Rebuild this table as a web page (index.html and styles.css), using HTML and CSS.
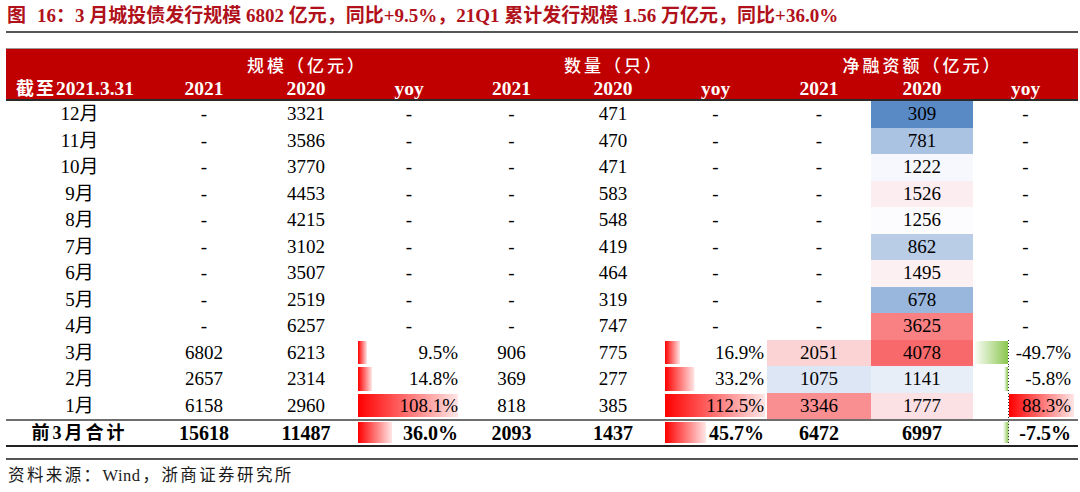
FILE: index.html
```html
<!DOCTYPE html>
<html lang="zh-CN">
<head>
<meta charset="utf-8">
<title>城投债发行规模</title>
<link rel="stylesheet" href="styles.css">
</head>
<body>
<div class="page">
  <h1 class="title">图<span class="gap"></span>16：3 月城投债发行规模 6802 亿元，同比+9.5%，21Q1 累计发行规模 1.56 万亿元，同比+36.0%</h1>
  <table class="report">
    <colgroup>
      <col class="w-label"><col class="w-102"><col class="w-102"><col class="w-104">
      <col class="w-101"><col class="w-102"><col class="w-103">
      <col class="w-104"><col class="w-102"><col class="w-105">
    </colgroup>
    <thead>
      <tr class="head-1">
        <th></th>
        <th colspan="3" class="grp">规模（亿元）</th>
        <th colspan="3" class="grp">数量（只）</th>
        <th colspan="3" class="grp">净融资额（亿元）</th>
      </tr>
      <tr class="head-2">
        <th class="lbl"><span class="cjk">截至</span>2021.3.31</th>
        <th>2021</th><th>2020</th><th>yoy</th>
        <th>2021</th><th>2020</th><th>yoy</th>
        <th>2021</th><th>2020</th><th class="yoy-net">yoy</th>
      </tr>
    </thead>
    <tbody>
      <tr><td>12月</td><td>-</td><td>3321</td><td>-</td><td>-</td><td>471</td><td>-</td><td>-</td><td style="background:#5a8ac6">309</td><td class="yoy-net">-</td></tr>
      <tr><td>11月</td><td>-</td><td>3586</td><td>-</td><td>-</td><td>470</td><td>-</td><td>-</td><td style="background:#abc3e2">781</td><td class="yoy-net">-</td></tr>
      <tr><td>10月</td><td>-</td><td>3770</td><td>-</td><td>-</td><td>471</td><td>-</td><td>-</td><td style="background:#f6f8fd">1222</td><td class="yoy-net">-</td></tr>
      <tr><td>9月</td><td>-</td><td>4453</td><td>-</td><td>-</td><td>583</td><td>-</td><td>-</td><td style="background:#fcedf0">1526</td><td class="yoy-net">-</td></tr>
      <tr><td>8月</td><td>-</td><td>4215</td><td>-</td><td>-</td><td>548</td><td>-</td><td>-</td><td style="background:#fcfbfe">1256</td><td class="yoy-net">-</td></tr>
      <tr><td>7月</td><td>-</td><td>3102</td><td>-</td><td>-</td><td>419</td><td>-</td><td>-</td><td style="background:#b9cde7">862</td><td class="yoy-net">-</td></tr>
      <tr><td>6月</td><td>-</td><td>3507</td><td>-</td><td>-</td><td>464</td><td>-</td><td>-</td><td style="background:#fcf0f3">1495</td><td class="yoy-net">-</td></tr>
      <tr><td>5月</td><td>-</td><td>2519</td><td>-</td><td>-</td><td>319</td><td>-</td><td>-</td><td style="background:#99b6dc">678</td><td class="yoy-net">-</td></tr>
      <tr><td>4月</td><td>-</td><td>6257</td><td>-</td><td>-</td><td>747</td><td>-</td><td>-</td><td style="background:#f98083">3625</td><td class="yoy-net">-</td></tr>
      <tr><td>3月</td><td>6802</td><td>6213</td><td class="bar" style="--w:9px">9.5%</td><td>906</td><td>775</td><td class="bar" style="--w:15px">16.9%</td><td style="background:#fbd3d5">2051</td><td style="background:#f8696b">4078</td><td class="net neg" style="--w:35px">-49.7%</td></tr>
      <tr><td>2月</td><td>2657</td><td>2314</td><td class="bar" style="--w:14px">14.8%</td><td>369</td><td>277</td><td class="bar" style="--w:29.5px">33.2%</td><td style="background:#dde6f4">1075</td><td style="background:#e8eef8">1141</td><td class="net neg" style="--w:4px">-5.8%</td></tr>
      <tr><td>1月</td><td>6158</td><td>2960</td><td class="bar" style="--w:100px">108.1%</td><td>818</td><td>385</td><td class="bar" style="--w:100px">112.5%</td><td style="background:#f98f91">3346</td><td style="background:#fbe1e4">1777</td><td class="net pos" style="--w:65px">88.3%</td></tr>
    </tbody>
    <tfoot>
      <tr class="total">
        <td class="lbl-total">前3月合计</td>
        <td>15618</td><td>11487</td><td class="bar" style="--w:34px">36.0%</td>
        <td>2093</td><td>1437</td><td class="bar" style="--w:41px">45.7%</td>
        <td>6472</td><td>6997</td><td class="net neg" style="--w:5.5px">-7.5%</td>
      </tr>
    </tfoot>
  </table>
  <div class="rule"></div>
  <p class="source">资料来源：<span class="latin">Wind</span>，浙商证券研究所</p>
</div>
</body>
</html>
```
FILE: styles.css
```css
* { box-sizing: border-box; }

body {
  margin: 0;
  background: #ffffff;
  color: #000000;
  font-family: "Liberation Serif", "Noto Sans CJK SC", serif;
}

.page {
  width: 1072px;
  margin-left: 6px;
}

.title {
  margin: 0;
  height: 33px;
  padding-left: 1px;
  border-bottom: 2px solid #555555;
  font-size: 19px;
  line-height: 31px;
  font-weight: 700;
  color: #b0111a;
  white-space: nowrap;
}

.gap {
  display: inline-block;
  width: 11px;
}

.report {
  margin-top: 15px;
  width: 1072px;
  table-layout: fixed;
  border-collapse: separate;
  border-spacing: 0;
  border-top: 1px solid #9a9a9a;
}

.w-label { width: 147px; }
.w-101 { width: 101px; }
.w-102 { width: 102px; }
.w-103 { width: 103px; }
.w-104 { width: 104px; }
.w-105 { width: 105px; }

.report th,
.report td {
  padding: 0;
  text-align: center;
  white-space: nowrap;
}

.report thead th {
  background: #c00000;
  color: #ffffff;
  vertical-align: bottom;
  line-height: 20px;
}

.head-1 th {
  height: 26px;
  font-family: "Noto Sans CJK SC", sans-serif;
  font-size: 17px;
  font-weight: 500;
  letter-spacing: 3px;
}

.head-2 th {
  height: 26px;
  border-bottom: 2px solid #2a2a2a;
  font-size: 19.5px;
  font-weight: 700;
}

.head-2 .lbl {
  text-align: left;
  padding-left: 10px;
}

.cjk {
  font-family: "Noto Sans CJK SC", sans-serif;
  font-size: 18px;
  letter-spacing: 2px;
}

.report tbody td {
  height: 26.5px;
  font-size: 19px;
  line-height: 20px;
  vertical-align: middle;
}

.bar {
  background-image: linear-gradient(90deg, #ff0000, #ffe6e6);
  background-repeat: no-repeat;
  background-position: 1px 1px;
  background-size: var(--w) calc(100% - 3px);
}

.report td.bar {
  text-align: right;
  padding-right: 3px;
}

.report td.net {
  text-align: right;
  padding-right: 7px;
  background-repeat: no-repeat;
}

.net.neg {
  background-image:
    repeating-linear-gradient(180deg, #333333 0 1px, transparent 1px 3px),
    linear-gradient(90deg, #ffffff, #8cc751);
  background-size: 1px 100%, var(--w) calc(100% - 3px);
  background-position: 35px 0, calc(35px - var(--w)) 1px;
}

.net.pos {
  background-image:
    repeating-linear-gradient(180deg, #333333 0 1px, transparent 1px 3px),
    linear-gradient(90deg, #ff0000, #ffe6e6);
  background-size: 1px 100%, var(--w) calc(100% - 3px);
  background-position: 35px 0, 36px 1px;
}

.report .yoy-net {
  padding-right: 0;
}

.total td {
  height: 28px;
  border-top: 2px solid #6e6e6e;
  border-bottom: 2px solid #222222;
  font-size: 20px;
  font-weight: 700;
  line-height: 20px;
  vertical-align: middle;
}

.total .lbl-total {
  font-size: 18px;
  letter-spacing: 3px;
}

.rule {
  margin-top: 11px;
  border-top: 2px solid #555555;
}

.source {
  margin: 5px 0 0 2px;
  font-size: 16.5px;
  line-height: 22px;
  letter-spacing: 2.4px;
  color: #1a1a1a;
}

.source .latin {
  letter-spacing: 0.5px;
  padding-right: 2px;
}
```
